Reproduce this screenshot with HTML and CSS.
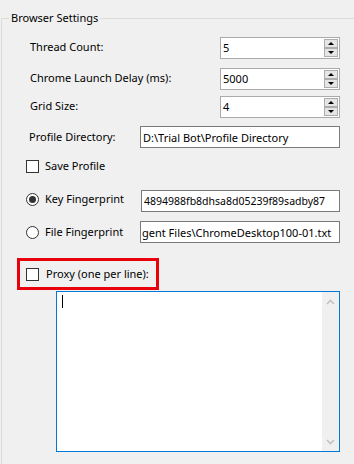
FILE: index.html
```html
<!DOCTYPE html>
<html lang="en">
<head>
<meta charset="utf-8">
<title>Browser Settings</title>
<link rel="stylesheet" href="styles.css">
</head>
<body>
<fieldset class="group">
  <legend class="group-title">Browser Settings</legend>

  <div class="row row-num row-1">
    <span class="num-label">Thread Count:</span>
    <div class="spin">
      <span class="spin-value">5</span>
      <div class="spin-btns">
        <span class="spin-btn spin-up"></span>
        <span class="spin-btn spin-down"></span>
      </div>
    </div>
  </div>

  <div class="row row-num row-2">
    <span class="num-label">Chrome Launch Delay (ms):</span>
    <div class="spin">
      <span class="spin-value">5000</span>
      <div class="spin-btns">
        <span class="spin-btn spin-up"></span>
        <span class="spin-btn spin-down"></span>
      </div>
    </div>
  </div>

  <div class="row row-num row-3">
    <span class="num-label">Grid Size:</span>
    <div class="spin">
      <span class="spin-value">4</span>
      <div class="spin-btns">
        <span class="spin-btn spin-up"></span>
        <span class="spin-btn spin-down"></span>
      </div>
    </div>
  </div>

  <div class="row row-dir">
    <span class="dir-label">Profile Directory:</span>
    <div class="textbox"><span class="textbox-text">D:\Trial Bot\Profile Directory</span></div>
  </div>

  <div class="row row-save">
    <span class="checkbox"></span>
    <span class="opt-label">Save Profile</span>
  </div>

  <div class="row row-key">
    <div class="opt">
      <span class="radio radio-on"></span>
      <span class="opt-label">Key Fingerprint</span>
    </div>
    <div class="textbox textbox-key"><span class="textbox-text textbox-text-key">4894988fb8dhsa8d05239f89sadby87</span></div>
  </div>

  <div class="row row-file">
    <div class="opt">
      <span class="radio"></span>
      <span class="opt-label">File Fingerprint</span>
    </div>
    <div class="textbox textbox-file"><span class="textbox-text textbox-text-tight">gent Files\ChromeDesktop100-01.txt</span></div>
  </div>

  <div class="row row-proxy">
    <div class="highlight">
      <span class="checkbox"></span>
      <span class="opt-label proxy-label">Proxy (one per line):</span>
    </div>
  </div>

  <div class="row row-area">
    <div class="textarea">
      <div class="textarea-body"><span class="caret"></span></div>
      <div class="vscroll">
        <svg class="chev" width="9" height="6" viewBox="0 0 9 6"><path d="M1 5 L4.5 1.5 L8 5" fill="none" stroke="#c2c2c2" stroke-width="1.6"/></svg>
        <svg class="chev" width="9" height="6" viewBox="0 0 9 6"><path d="M1 1 L4.5 4.5 L8 1" fill="none" stroke="#c2c2c2" stroke-width="1.6"/></svg>
      </div>
    </div>
  </div>
</fieldset>
</body>
</html>
```

FILE: styles.css
```css
html, body {
  margin: 0;
  padding: 0;
}

body {
  width: 354px;
  height: 464px;
  overflow: hidden;
  background: #f0f0f0;
  font-family: "Noto Sans", "Open Sans", sans-serif;
  font-size: 11px;
  color: #000;
}

.group {
  box-sizing: border-box;
  width: 355px;
  height: 456px;
  margin: 10px 0 0 1px;
  padding: 0;
  border: 1px solid #dcdcdc;
  border-right: 0;
  border-bottom: 0;
  min-width: 0;
}

.group-title {
  margin-left: 7px;
  padding: 0 2px;
  line-height: 16px;
  height: 16px;
}

.row {
  display: flex;
  align-items: center;
}

/* numeric rows */
.row-num {
  padding-left: 28px;
  height: 22px;
}
.row-1 { margin-top: 11px; }
.row-2 { margin-top: 9px; }
.row-3 { margin-top: 6px; }

.num-label {
  width: 190px;
  margin-top: -3px;
}

.spin {
  box-sizing: border-box;
  width: 120px;
  height: 22px;
  border: 1px solid #ababab;
  background: #fff;
  display: flex;
  align-items: center;
  padding-left: 2px;
}

.spin-value {
  flex: 1;
  line-height: 18px;
}

.spin-btns {
  display: flex;
  flex-direction: column;
  margin-right: 1px;
  align-self: flex-start;
  margin-top: 1px;
}

.spin-btn {
  box-sizing: border-box;
  width: 14px;
  height: 9px;
  border: 1px solid #adadad;
  background: #e5e5e5;
  display: flex;
  align-items: center;
  justify-content: center;
}

.spin-up::after,
.spin-down::after {
  content: "";
  width: 0;
  height: 0;
  border-left: 3px solid transparent;
  border-right: 3px solid transparent;
}
.spin-up::after { border-bottom: 3px solid #000; }
.spin-down::after { border-top: 3px solid #000; }

/* profile directory */
.row-dir {
  margin-top: 8px;
  padding-left: 27px;
  height: 22px;
}

.dir-label {
  width: 111px;
  margin-top: -2px;
}

.textbox {
  box-sizing: border-box;
  width: 200px;
  height: 22px;
  border: 1px solid #7a7a7a;
  background: #fff;
  padding-left: 2px;
  display: flex;
  align-items: center;
  overflow: hidden;
  white-space: nowrap;
}

.textbox-text-tight {
  margin-left: -1px;
}

.textbox-text-key {
  font-size: 10.5px;
}

.textbox-key {
  margin-left: 1px;
  width: 199px;
}

/* save profile */
.row-save {
  margin-top: 10px;
  height: 16px;
  padding-left: 24px;
}

.checkbox {
  box-sizing: border-box;
  width: 13px;
  height: 13px;
  border: 1px solid #333;
  background: #fff;
  flex: none;
}

.opt-label {
  margin-left: 6px;
  margin-top: -2px;
}

/* fingerprint rows */
.row-key {
  margin-top: 16px;
  height: 22px;
  padding-left: 24px;
}

.row-file {
  margin-top: 9px;
  height: 22px;
  padding-left: 24px;
}

.opt {
  display: flex;
  align-items: center;
  width: 114px;
}

.row-key .opt {
  margin-top: -4px;
}

.radio {
  box-sizing: border-box;
  width: 13px;
  height: 13px;
  border: 1px solid #333;
  border-radius: 50%;
  background: #fff;
  flex: none;
  display: flex;
  align-items: center;
  justify-content: center;
}

.radio-on::after {
  content: "";
  width: 7px;
  height: 7px;
  border-radius: 50%;
  background: #333;
}

/* proxy */
.row-proxy {
  margin-top: 15px;
  padding-left: 15px;
}

.highlight {
  box-sizing: border-box;
  width: 142px;
  height: 32px;
  border: 3px solid #e8000b;
  display: flex;
  align-items: center;
  padding-left: 6px;
}

.proxy-label {
  margin-left: 7px;
}

/* textarea */
.row-area {
  margin-top: 1px;
  padding-left: 54px;
}

.textarea {
  box-sizing: border-box;
  width: 284px;
  height: 161px;
  border: 1px solid #0078d7;
  background: #fff;
  display: flex;
}

.textarea-body {
  flex: 1;
  padding: 3px 0 0 5px;
}

.caret {
  display: block;
  width: 1px;
  height: 13px;
  background: #000;
}

.vscroll {
  width: 17px;
  background: #f0f0f0;
  display: flex;
  flex-direction: column;
  justify-content: space-between;
  align-items: center;
  padding: 7px 0 6px;
}

.chev {
  display: block;
}
```
